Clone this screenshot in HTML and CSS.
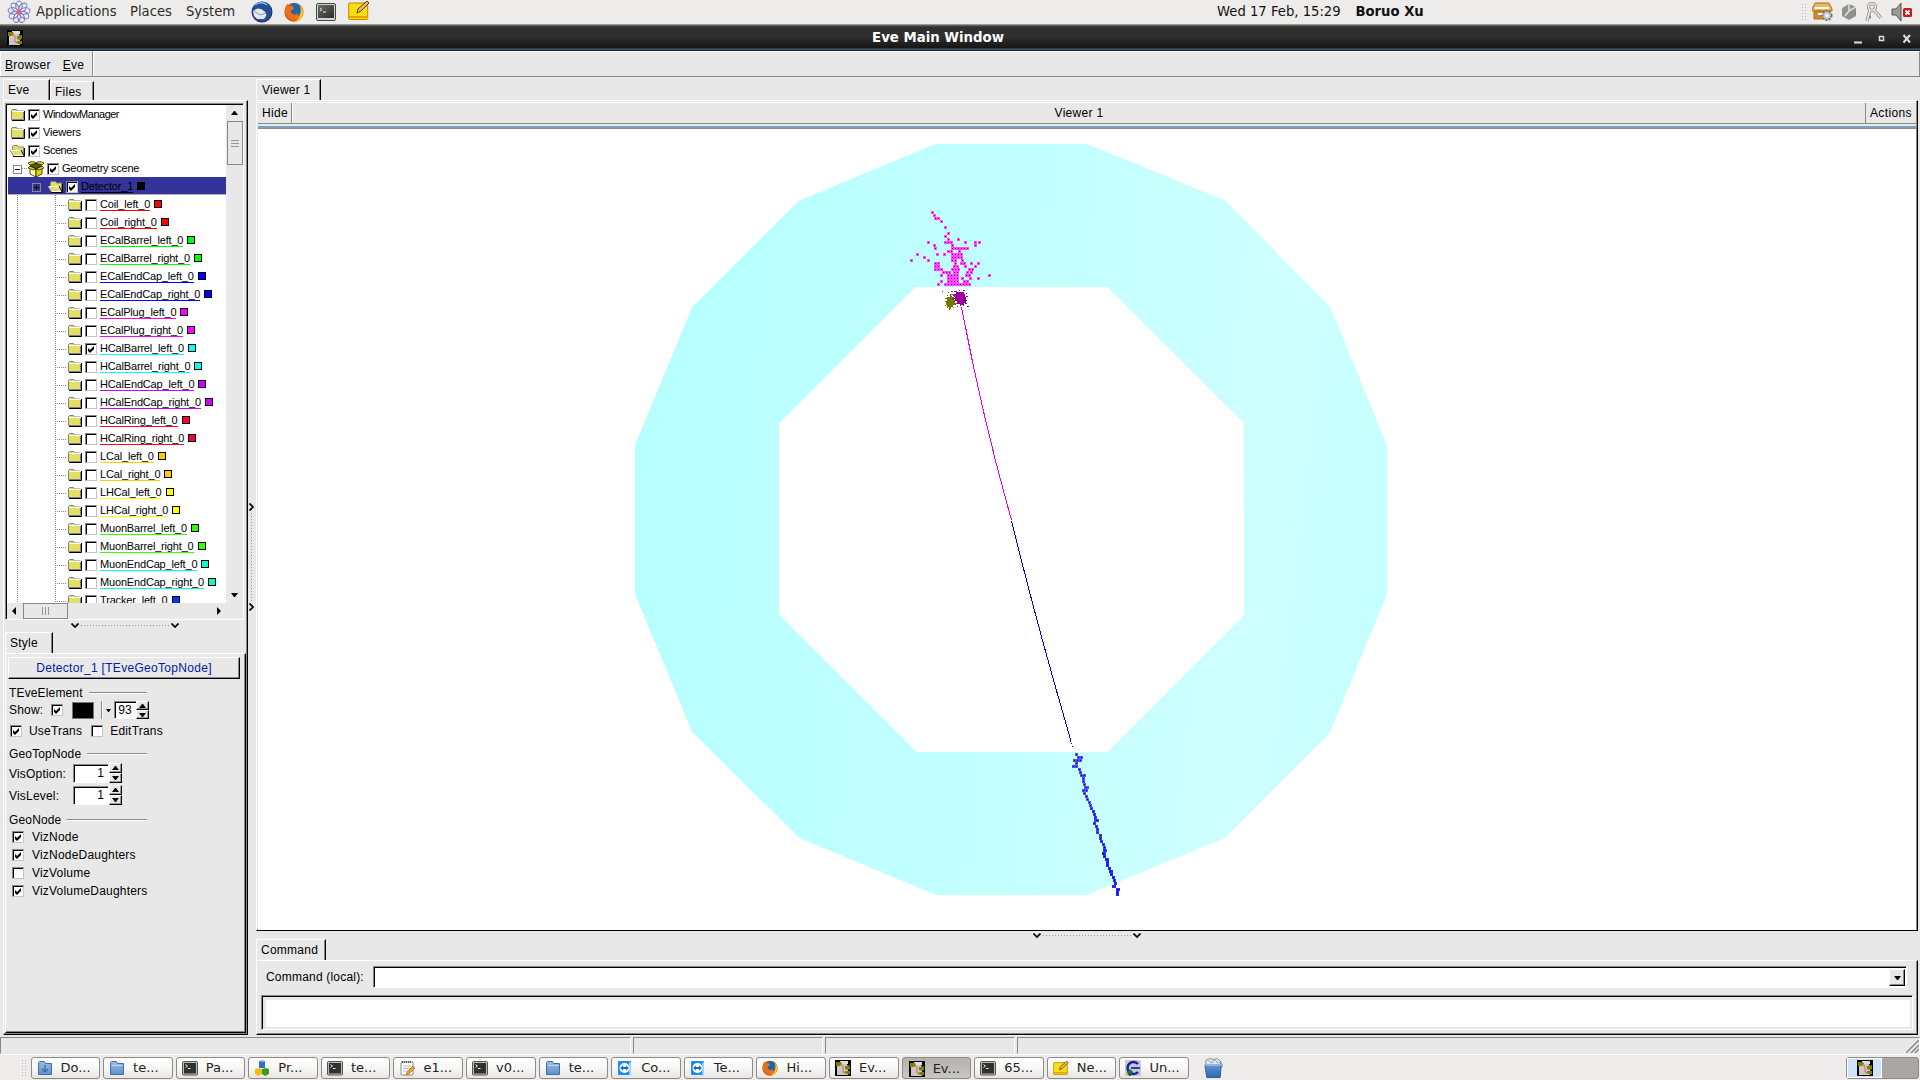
FILE: index.html
```html
<!DOCTYPE html>
<html lang="en">
<head>
<meta charset="utf-8">
<title>Eve Main Window</title>
<link rel="stylesheet" href="styles.css">
</head>
<body>
<svg class="defs" width="0" height="0">
  <defs>
    <pattern id="dither" width="2" height="2" patternUnits="userSpaceOnUse"><rect width="2" height="2" fill="#f4f000"/><rect width="1" height="1" fill="#d0d0c8"/><rect x="1" y="1" width="1" height="1" fill="#d0d0c8"/></pattern>
    <linearGradient id="blue" x1="0" y1="0" x2="0" y2="1"><stop offset="0" stop-color="#9dbde3"/><stop offset="1" stop-color="#5f8fc9"/></linearGradient>
    <linearGradient id="bin" x1="0" y1="0" x2="0" y2="1"><stop offset="0" stop-color="#5f93d2"/><stop offset="1" stop-color="#2f68b0"/></linearGradient>
    <linearGradient id="term" x1="0" y1="0" x2="1" y2="1"><stop offset="0" stop-color="#6a6d68"/><stop offset="1" stop-color="#2b2d2a"/></linearGradient>
    <radialGradient id="fox"><stop offset="0.4" stop-color="#f8a41c"/><stop offset="1" stop-color="#d9480f"/></radialGradient>
    <radialGradient id="bird"><stop offset="0.2" stop-color="#5b9be0"/><stop offset="1" stop-color="#15336e"/></radialGradient>
    <linearGradient id="ring" x1="0" y1="0.42" x2="1" y2="0.54"><stop offset="0" stop-color="#b7ffff"/><stop offset="0.45" stop-color="#c1ffff"/><stop offset="0.84" stop-color="#ceffff"/><stop offset="1" stop-color="#c5ffff"/></linearGradient>
  </defs>
  <symbol id="i-folder" viewBox="0 0 15 13"><path d="M1.5 11.500v-9l1-1h4l1 1.500h6v8.500z" fill="url(#dither)" stroke="#808080"/><path d="M2 3.500h12" stroke="#fff"/><path d="M2 12.500h12.500V3" fill="none" stroke="#000"/></symbol>
  <symbol id="i-open" viewBox="0 0 15 13"><path d="M2.500 10.500v-8l1-1h4l1 1.500h5v8z" fill="url(#dither)" stroke="#808080"/><path d="M0.500 6.500h10l3 5h-10z" fill="url(#dither)" stroke="#fff"/><path d="M0.500 6v1l3 5" fill="none" stroke="#808080"/><path d="M3 12.500h11.500V4M11 6l3 6" fill="none" stroke="#000"/></symbol>
  <symbol id="i-box" viewBox="0 0 16 16"><path d="M2 5l6 3v8l-6-3z" fill="#ffffa0" stroke="#000" stroke-width=".7"/><path d="M14 5L8 8v8l6-3z" fill="#e0d800" stroke="#000" stroke-width=".7"/><path d="M2 5l6-3 6 3-6 3z" fill="#5c5800" stroke="#000" stroke-width=".6"/><path d="M2 4L0 2l5-2 3 2zM14 4l2-2-5-2-3 2zM2 5L0 7l5 2 3-1zM14 5l2 2-5 2-3-1z" fill="#d8d020" stroke="#000" stroke-width=".6"/></symbol>
  <symbol id="i-check" viewBox="0 0 12 12"><path d="M3 5v3l2 2 4-4V3L5 7z" fill="#000"/></symbol>
  <symbol id="i-up" viewBox="0 0 7 4"><path d="M0 4h7L4 0H3z"/></symbol>
  <symbol id="i-down" viewBox="0 0 7 4"><path d="M0 0h7L4 4H3z"/></symbol>
  <symbol id="i-chev" viewBox="0 0 8 5"><path d="M.5.500L4 4 7.500.500" fill="none" stroke="#000" stroke-width="1.700"/></symbol>
  <symbol id="i-eve" viewBox="0 0 16 16"><rect width="16" height="16" fill="#000"/><path d="M2 3h9l2 3v9H2z" fill="#c8c8c8"/><path d="M5 1h8v3H5z" fill="#ddd"/><path d="M1 2h5l1 2-2 2H1zM10 6h3l2-1v4l-2 1-3-1zM9 12l2-1h4v3h-4z" fill="#808000"/><path d="M5 4l3 2v6l2 1" fill="none" stroke="#f55" stroke-width="1"/></symbol>
  <symbol id="i-term" viewBox="0 0 20 18"><rect x=".5" y=".5" width="19" height="17" rx="1.500" fill="#d2d5cf" stroke="#454745"/><rect x="2" y="2" width="16" height="13" fill="url(#term)"/><path d="M4 5l2 1.500L4 8M7 9h3" stroke="#eee" fill="none"/></symbol>
  <symbol id="i-termsm" viewBox="0 0 16 16"><rect x=".5" y="1.500" width="15" height="13.500" rx="1" fill="#b9bcb6" stroke="#555"/><rect x="2" y="3" width="12" height="10.500" fill="#30322f"/><path d="M3.500 4.500l2 1.500-2 1.500M6 8.500h2.500" stroke="#eee" fill="none"/></symbol>
  <symbol id="i-note" viewBox="0 0 22 21"><rect x=".7" y="3" width="19" height="16.500" rx="1" fill="#f9dc12" stroke="#b98a00"/><path d="M1 17h19" stroke="#e3a500" stroke-width="2"/><path d="M9 13l1-4 9-8 2 2-8 8z" fill="#e7b66b" stroke="#4d3510" stroke-width=".9"/></symbol>
  <symbol id="i-fox" viewBox="0 0 20 20"><circle cx="10" cy="10.300" r="9.500" fill="url(#fox)"/><circle cx="10.500" cy="8" r="6.800" fill="#1f66ad"/><path d="M1 8C1 4 3 2 4 2l1 2c3-1 4 0 5 2 0 2-3 1-3 4 1 3 5 3 7 1 0 5-5 7-9 5-3-2-4-5-4-8z" fill="#e8701a"/><path d="M16 3c3 3 4 8 2 12-2 3-5 5-8 5 6-3 8-9 6-17z" fill="#fbc52d"/></symbol>
  <symbol id="i-bird" viewBox="0 0 22 22"><circle cx="11" cy="11" r="10.500" fill="url(#bird)"/><path d="M2 10l5-3 7 2 2 4-3 5-7 0-3-3z" fill="#e6e9ee"/><path d="M3 10l6 4 6-2" fill="none" stroke="#8b95a5"/><path d="M3 5C7 0 16 0 19 5c3 5 1 11-5 15 2-4 2-8-1-10-3-3-6-3-10-2z" fill="#234f96"/><path d="M4 4C8 1 13 1 16 4" fill="none" stroke="#7fb4ee" stroke-width="1.500"/></symbol>
  <symbol id="i-dir" viewBox="0 0 16 16"><path d="M1.500 14.500v-12l1-1h5l1 2h6v11z" fill="url(#blue)" stroke="#3f6fa9"/><path d="M2.500 5.500h11" stroke="#bdd5ef"/></symbol>
  <symbol id="i-save" viewBox="0 0 16 16"><path d="M1.500 14.500v-12l1-1h5l1 2h6v11z" fill="url(#blue)" stroke="#3f6fa9"/><path d="M8 5v6M5 9l3 3 3-3" fill="none" stroke="#2f5f9f" stroke-width="1.500" stroke-dasharray="1.500 .7"/></symbol>
  <symbol id="i-cubes" viewBox="0 0 16 16"><path d="M5 1h6v7H5z" fill="#2e6fd0"/><path d="M5 1l3-1 3 1-3 1.500z" fill="#7fb0f0"/><path d="M1 9l3-1 4 1v5l-4 2-3-2z" fill="#f2bd10"/><path d="M8 9l4-1 3 1v5l-4 2-3-2z" fill="#3c9a2a"/></symbol>
  <symbol id="i-edit" viewBox="0 0 16 16"><rect x="2" y="2" width="12" height="13" rx="1" fill="#fff" stroke="#888"/><path d="M3 2h10" stroke="#555" stroke-width="2" stroke-dasharray="1 1"/><path d="M4 6h8M4 8.500h8M4 11h5" stroke="#bbb"/><path d="M7 15l1-3 6-6 2 2-6 6z" fill="#f59a23" stroke="#a85a00" stroke-width=".6"/></symbol>
  <symbol id="i-team" viewBox="0 0 16 16"><rect x="1" y="1" width="13" height="14" rx="1" fill="#1b8cf0"/><path d="M14 3v12l-2 1V2z" fill="#9dd0fb"/><circle cx="7.500" cy="8" r="5" fill="#fff"/><path d="M3 8l3-2.500V7h3V5.500L12 8l-3 2.500V9H6v1.500z" fill="#0e6fd0"/></symbol>
  <symbol id="i-c" viewBox="0 0 16 16"><rect width="16" height="16" fill="#c9c9cd"/><path d="M13 4a6 6 0 1 0 0 8" fill="none" stroke="#1c1ca8" stroke-width="2.500"/><path d="M6 8h9" stroke="#3434d0" stroke-width="2"/><path d="M2 12l3-3 3 3-2 3H3z" fill="#0a7d20"/><path d="M5 14v2" stroke="#900" stroke-width="1.500"/></symbol>
  <symbol id="i-trash" viewBox="0 0 22 22"><path d="M3 7l0-4 4-2 4 1 4-1 4 4-1 4H3z" fill="#dfe6ec" stroke="#6d7782" stroke-width=".8"/><path d="M6 3l3 3 3-4 4 4" fill="none" stroke="#8b95a0"/><path d="M2 8h17l-1 13H4z" fill="url(#bin)" stroke="#2c5a94"/><path d="M17 4l4 4-2 3z" fill="#3f78bf"/><path d="M2 7h18v2H2z" fill="#8fb7e4"/></symbol>
</svg>

<header class="desk-top">
  <svg class="logo" width="24" height="24" viewBox="-12 -12 24 24"><g fill="none" stroke="#6d74c9" stroke-width="1"><ellipse cy="-6" rx="3.200" ry="5"/><ellipse cy="-6" rx="3.200" ry="5" transform="rotate(40)"/><ellipse cy="-6" rx="3.200" ry="5" transform="rotate(80)"/><ellipse cy="-6" rx="3.200" ry="5" transform="rotate(120)"/><ellipse cy="-6" rx="3.200" ry="5" transform="rotate(160)"/><ellipse cy="-6" rx="3.200" ry="5" transform="rotate(200)"/><ellipse cy="-6" rx="3.200" ry="5" transform="rotate(240)"/><ellipse cy="-6" rx="3.200" ry="5" transform="rotate(280)"/><ellipse cy="-6" rx="3.200" ry="5" transform="rotate(320)"/></g><circle r="2.600" fill="#d66a78"/></svg>
  <span class="m-app">Applications</span><span class="m-places">Places</span><span class="m-system">System</span>
  <svg class="l1" width="22" height="22"><use href="#i-bird"/></svg>
  <svg class="l2" width="20" height="20"><use href="#i-fox"/></svg>
  <svg class="l3" width="20" height="18"><use href="#i-term"/></svg>
  <svg class="l4" width="22" height="21"><use href="#i-note"/></svg>
  <span class="clock">Wed 17 Feb, 15:29</span><b>Boruo Xu</b>
  <div class="tray">
    <i class="grip"></i>
    <svg width="22" height="20" viewBox="0 0 22 20"><path d="M3 1h14l3 6v2H0V7z" fill="#f0b45a" stroke="#a8701c"/><path d="M2 9h16v8H2z" fill="#d08a2c" stroke="#a8701c"/><path d="M3 6h14M6 12h6" stroke="#fff" stroke-width="2"/><circle cx="15" cy="13.500" r="4.500" fill="#ccc" stroke="#777" stroke-width="2" stroke-dasharray="2 1.200"/><circle cx="15" cy="13.500" r="1.500" fill="#fff"/></svg>
    <svg width="14" height="18" viewBox="0 0 14 18"><path d="M0 5l7-4 7 3v9l-7 4-7-4z" fill="#8f918f"/><path d="M7 1v7l7-4M7 8l-4 5" stroke="#e2e2e2" fill="none" stroke-width="1.500"/></svg>
    <svg width="19" height="21" viewBox="0 0 19 21"><g fill="none" stroke="#8d8f8c" stroke-width="3.200"><circle cx="8" cy="5" r="3.500"/><path d="M6 8L3 19M10 8l7 8M4 15h3"/></g><g fill="none" stroke="#eee" stroke-width="1.500"><circle cx="8" cy="5" r="3.500"/><path d="M6 8L3 19M10 8l7 8"/></g></svg>
    <svg width="22" height="18" viewBox="0 0 22 18"><path d="M1 6h4l5-6v18l-5-6H1z" fill="#9a9c98" stroke="#555"/><rect x="12" y="5" width="9" height="9" rx="1.500" fill="#d2141c"/><path d="M14.500 7.500l4 4m0-4l-4 4" stroke="#fff" stroke-width="1.800"/></svg>
  </div>
</header>

<div class="title">
  <svg width="16" height="16"><use href="#i-eve"/></svg>
  <h1>Eve Main Window</h1>
  <svg class="wm" width="62" height="12" viewBox="0 0 62 12" fill="none" stroke="#ddd" stroke-width="2"><path d="M1 9.500h8"/><path d="M26.500 3.500h4v4h-4z" stroke-width="1.500"/><path d="M50.500 2l6.500 7.500m0-7.500l-6.500 7.500"/></svg>
</div>

<nav class="menubar"><div class="menus"><span><u>B</u>rowser</span><span><u>E</u>ve</span></div><div class="rest"></div></nav>

<main>
  <section class="left">
    <div class="tabs"><span class="tab on eve">Eve</span><span class="tab files">Files</span></div>
    <div class="left-frame">
      <div class="treebox">
        <div class="tree-top">
          <div class="tree">
            <div class="row r0"><svg width="15" height="13"><use href="#i-folder"/></svg><i class="cb"><svg width="12" height="12"><use href="#i-check"/></svg></i><span class="wide">WindowManager</span></div>
            <div class="row r0"><svg width="15" height="13"><use href="#i-folder"/></svg><i class="cb"><svg width="12" height="12"><use href="#i-check"/></svg></i><span>Viewers</span></div>
            <div class="row r0"><svg width="15" height="13"><use href="#i-open"/></svg><i class="cb"><svg width="12" height="12"><use href="#i-check"/></svg></i><span class="sc">Scenes</span></div>
            <div class="row r1"><i class="pm minus"></i><svg width="16" height="16"><use href="#i-box"/></svg><i class="cb"><svg width="12" height="12"><use href="#i-check"/></svg></i><span class="geo">Geometry scene</span></div>
            <div class="row r2"><i class="pm plus"></i><svg width="15" height="13"><use href="#i-open"/></svg><i class="cb"><svg width="12" height="12"><use href="#i-check"/></svg></i><span class="n k">Detector_1</span><i class="sw k"></i></div>
            <div class="row leaf red"><svg width="15" height="13"><use href="#i-folder"/></svg><i class="cb"></i><span class="n">Coil_left_0</span><i class="sw"></i></div>
            <div class="row leaf red"><svg width="15" height="13"><use href="#i-folder"/></svg><i class="cb"></i><span class="n">Coil_right_0</span><i class="sw"></i></div>
            <div class="row leaf lime"><svg width="15" height="13"><use href="#i-folder"/></svg><i class="cb"></i><span class="n">ECalBarrel_left_0</span><i class="sw"></i></div>
            <div class="row leaf lime"><svg width="15" height="13"><use href="#i-folder"/></svg><i class="cb"></i><span class="n">ECalBarrel_right_0</span><i class="sw"></i></div>
            <div class="row leaf blue"><svg width="15" height="13"><use href="#i-folder"/></svg><i class="cb"></i><span class="n">ECalEndCap_left_0</span><i class="sw"></i></div>
            <div class="row leaf blue"><svg width="15" height="13"><use href="#i-folder"/></svg><i class="cb"></i><span class="n">ECalEndCap_right_0</span><i class="sw"></i></div>
            <div class="row leaf magenta"><svg width="15" height="13"><use href="#i-folder"/></svg><i class="cb"></i><span class="n">ECalPlug_left_0</span><i class="sw"></i></div>
            <div class="row leaf magenta"><svg width="15" height="13"><use href="#i-folder"/></svg><i class="cb"></i><span class="n">ECalPlug_right_0</span><i class="sw"></i></div>
            <div class="row leaf cyan"><svg width="15" height="13"><use href="#i-folder"/></svg><i class="cb"><svg width="12" height="12"><use href="#i-check"/></svg></i><span class="n">HCalBarrel_left_0</span><i class="sw"></i></div>
            <div class="row leaf cyan"><svg width="15" height="13"><use href="#i-folder"/></svg><i class="cb"></i><span class="n">HCalBarrel_right_0</span><i class="sw"></i></div>
            <div class="row leaf violet"><svg width="15" height="13"><use href="#i-folder"/></svg><i class="cb"></i><span class="n">HCalEndCap_left_0</span><i class="sw"></i></div>
            <div class="row leaf violet"><svg width="15" height="13"><use href="#i-folder"/></svg><i class="cb"></i><span class="n">HCalEndCap_right_0</span><i class="sw"></i></div>
            <div class="row leaf crimson"><svg width="15" height="13"><use href="#i-folder"/></svg><i class="cb"></i><span class="n">HCalRing_left_0</span><i class="sw"></i></div>
            <div class="row leaf crimson"><svg width="15" height="13"><use href="#i-folder"/></svg><i class="cb"></i><span class="n">HCalRing_right_0</span><i class="sw"></i></div>
            <div class="row leaf orange"><svg width="15" height="13"><use href="#i-folder"/></svg><i class="cb"></i><span class="n">LCal_left_0</span><i class="sw"></i></div>
            <div class="row leaf orange"><svg width="15" height="13"><use href="#i-folder"/></svg><i class="cb"></i><span class="n">LCal_right_0</span><i class="sw"></i></div>
            <div class="row leaf yellow"><svg width="15" height="13"><use href="#i-folder"/></svg><i class="cb"></i><span class="n">LHCal_left_0</span><i class="sw"></i></div>
            <div class="row leaf yellow"><svg width="15" height="13"><use href="#i-folder"/></svg><i class="cb"></i><span class="n">LHCal_right_0</span><i class="sw"></i></div>
            <div class="row leaf green"><svg width="15" height="13"><use href="#i-folder"/></svg><i class="cb"></i><span class="n">MuonBarrel_left_0</span><i class="sw"></i></div>
            <div class="row leaf green"><svg width="15" height="13"><use href="#i-folder"/></svg><i class="cb"></i><span class="n">MuonBarrel_right_0</span><i class="sw"></i></div>
            <div class="row leaf teal"><svg width="15" height="13"><use href="#i-folder"/></svg><i class="cb"></i><span class="n">MuonEndCap_left_0</span><i class="sw"></i></div>
            <div class="row leaf teal"><svg width="15" height="13"><use href="#i-folder"/></svg><i class="cb"></i><span class="n">MuonEndCap_right_0</span><i class="sw"></i></div>
            <div class="row leaf azure"><svg width="15" height="13"><use href="#i-folder"/></svg><i class="cb"></i><span class="n">Tracker_left_0</span><i class="sw"></i></div>
          </div>
          <div class="vscroll"><svg width="7" height="4"><use href="#i-up"/></svg><i class="thumb"></i><svg class="end" width="7" height="4"><use href="#i-down"/></svg></div>
        </div>
        <div class="hscroll"><svg width="4" height="8" viewBox="0 0 4 8"><path d="M4 0v8L0 4z"/></svg><i class="thumb"></i><svg class="end" width="4" height="8" viewBox="0 0 4 8"><path d="M0 0v8l4-4z"/></svg></div>
      </div>
      <div class="hsplit"><svg width="8" height="5"><use href="#i-chev"/></svg><i></i><svg width="8" height="5"><use href="#i-chev"/></svg></div>
      <div class="tabs st"><span class="tab on style">Style</span></div>
      <div class="style-frame">
        <div class="obj">Detector_1 [TEveGeoTopNode]</div>
        <div class="grp g1"><span>TEveElement</span><hr></div>
        <div class="line show"><span>Show:</span><i class="cb"><svg width="12" height="12"><use href="#i-check"/></svg></i><i class="color"></i><i class="sep"></i><svg width="5" height="3" viewBox="0 0 7 4"><path d="M0 0h7L4 4H3z"/></svg><span class="num n93">93</span><i class="spin s18"><b><svg width="7" height="4"><use href="#i-up"/></svg></b><b><svg width="7" height="4"><use href="#i-down"/></svg></b></i></div>
        <div class="line trans"><i class="cb"><svg width="12" height="12"><use href="#i-check"/></svg></i><span>UseTrans</span><i class="cb second"></i><span>EditTrans</span></div>
        <div class="grp g2"><span>GeoTopNode</span><hr></div>
        <div class="line vis"><span>VisOption:</span><span class="num">1</span><i class="spin"><b><svg width="7" height="4"><use href="#i-up"/></svg></b><b><svg width="7" height="4"><use href="#i-down"/></svg></b></i></div>
        <div class="line vis"><span>VisLevel:</span><span class="num">1</span><i class="spin"><b><svg width="7" height="4"><use href="#i-up"/></svg></b><b><svg width="7" height="4"><use href="#i-down"/></svg></b></i></div>
        <div class="grp g3"><span>GeoNode</span><hr></div>
        <div class="line viz"><i class="cb"><svg width="12" height="12"><use href="#i-check"/></svg></i><span>VizNode</span></div>
        <div class="line viz"><i class="cb"><svg width="12" height="12"><use href="#i-check"/></svg></i><span>VizNodeDaughters</span></div>
        <div class="line viz"><i class="cb"></i><span>VizVolume</span></div>
        <div class="line viz"><i class="cb"><svg width="12" height="12"><use href="#i-check"/></svg></i><span>VizVolumeDaughters</span></div>
      </div>
    </div>
  </section>

  <div class="vsplit"><svg width="5" height="8" viewBox="0 0 5 8"><path d="M.5.500L4 4 .5 7.500" fill="none" stroke="#000" stroke-width="1.700"/></svg><i></i><svg width="5" height="8" viewBox="0 0 5 8"><path d="M.5.500L4 4 .5 7.500" fill="none" stroke="#000" stroke-width="1.700"/></svg></div>

  <section class="right">
    <div class="tabs"><span class="tab on viewer">Viewer 1</span></div>
    <div class="view-frame">
      <div class="view-bar"><span class="hide">Hide</span><span class="name">Viewer 1</span><span class="actions">Actions</span></div>
      <div class="accent"></div>
      <svg class="canvas" width="1658" height="801" viewBox="258 129 1658 801" shape-rendering="crispEdges">
        <path fill="url(#ring)" fill-rule="evenodd" d="M936.500 143.500H1086.500L1225 200.500 1330 306.500 1387 445V594L1330 732.500 1225 838 1086.500 895H936.500L799.500 838 692.500 732.500 635 594V445L692.500 306.500 799.500 200.500ZM915.500 287L779 423.500V615L915.500 751.500H1108L1244 615V423.500L1108 287Z"/>
        <g transform="translate(900 200)" fill="none">
          <path stroke="#ff48ff" stroke-width="3" d="M31 12.500h3M33 15.500h3M34 18.500h6M40 21.500h3M44 27.500h3M47 33.500h3M44 36.500h3M47 39.500h3M57 39.500h3M27 42.500h3M44 42.500h9M64 42.500h3M74 42.500h3M78 42.500h3M33 45.500h3M51 45.500h3M74 45.500h3M34 48.500h3M51 48.500h18M47 51.500h6M58 51.500h3M16 54.500h3M36 54.500h3M43 54.500h3M51 54.500h12M23 57.500h3M51 57.500h12M10 60.500h3M27 60.500h3M51 60.500h6M61 60.500h3M34 63.500h6M54 63.500h3M60 63.500h6M70 63.500h3M77 63.500h3M34 66.500h6M53 66.500h6M64 66.500h3M74 66.500h3M34 69.500h9M51 69.500h9M68 69.500h6M42 72.500h9M53 72.500h6M66 72.500h3M70 72.500h3M40 75.500h3M47 75.500h12M65 75.500h6M88 75.500h3M47 78.500h12M61 78.500h3M69 78.500h3M77 78.500h3M40 81.500h3M47 81.500h12M63 81.500h6M37 84.500h3M44 84.500h27"/>
          <path stroke="#800080" stroke-dasharray="0 1 1 1" d="M31 12.500h3M33 15.500h3M34 18.500h6M40 21.500h3M44 27.500h3M47 33.500h3M44 36.500h3M47 39.500h3M57 39.500h3M27 42.500h3M44 42.500h9M64 42.500h3M74 42.500h3M78 42.500h3M33 45.500h3M51 45.500h3M74 45.500h3M34 48.500h3M51 48.500h18M47 51.500h6M58 51.500h3M16 54.500h3M36 54.500h3M43 54.500h3M51 54.500h12M23 57.500h3M51 57.500h12M10 60.500h3M27 60.500h3M51 60.500h6M61 60.500h3M34 63.500h6M54 63.500h3M60 63.500h6M70 63.500h3M77 63.500h3M34 66.500h6M53 66.500h6M64 66.500h3M74 66.500h3M34 69.500h9M51 69.500h9M68 69.500h6M42 72.500h9M53 72.500h6M66 72.500h3M70 72.500h3M40 75.500h3M47 75.500h12M65 75.500h6M88 75.500h3M47 78.500h12M61 78.500h3M69 78.500h3M77 78.500h3M40 81.500h3M47 81.500h12M63 81.500h6M37 84.500h3M44 84.500h27"/>
          <path fill="#767600" d="M47 97h3v-1h2v1h2v3h1v5h-2v2h-2v2h-2v-2h-2v-2h-1v-3h1z"/>
          <path stroke="#767600" d="M48 92.500h1M50 94.500h4M47 95.500h1M45 98.500h2M45 101.500h2M53 107.500h1M55 103.500h2M47 107.500h1M49 109.500h1M45 105.500h1"/>
          <path fill="#9c009c" d="M56 92h8v2h1v3h1v6h-2v2h-4v-1h-3v-3h-2v-4h-1v-3h2z"/>
          <path stroke="#9c009c" d="M42 91.500h1M51 91.500h2M54 91.500h3M59 90.500h1M63 90.500h2M66 93.500h1M66 96.500h2M53 95.500h3M52 98.500h3M66 100.500h1M65 103.500h2M67 106.500h2M60 105.500h1M55 104.500h1M57 106.500h1M63 105.500h1M50 95.500h1"/>
        </g>
        <path fill="none" stroke="#e400e4" d="M961.500 307Q983 420 1011.500 520"/>
        <path fill="none" stroke="#0000c8" d="M1011.500 521Q1037 625 1071 741"/><path stroke="#000080" d="M1070 741.500h1M1071 743.500h1M1072 746.500h1"/>
        <g fill="none" stroke="#5050ff" stroke-width="3">
          <path d="M1075 754.500h3M1077 757.500h6M1073 760.500h9M1075 763.500h3M1072 766.500h6M1078 769.500h3M1079 772.500h3M1080 775.500h6M1082 778.500h3M1082 781.500h3M1083 784.500h3M1084 787.500h5M1082 790.500h6M1083 793.500h3M1085 796.500h3M1086 799.500h3M1088 802.500h3M1089 805.500h3"/>
          <path stroke="#3c3cff" d="M1090 808.500h3M1092 811.500h3M1093 814.500h3M1094 817.500h3M1094 820.500h5M1093 823.500h3M1095 826.500h3M1096 829.500h3M1096 832.500h3M1099 835.500h3M1099 838.500h3M1100 841.500h3M1102 844.500h3M1103 847.500h3M1103 850.500h4"/>
          <path stroke="#2828ff" d="M1102 853.500h4M1103 856.500h3M1105 859.500h4M1106 862.500h3M1106 865.500h3M1108 868.500h3M1109 871.500h4M1110 874.500h3M1112 877.500h3M1113 880.500h3M1114 883.500h3M1112 886.500h4M1116 889.500h4M1116 892.500h3M1116 894.500h3"/>
          <path stroke="#000080" stroke-width="1" stroke-dasharray="0 1 1 1" d="M1075 754.500h3M1077 757.500h6M1073 760.500h9M1075 763.500h3M1072 766.500h6M1078 769.500h3M1079 772.500h3M1080 775.500h6M1082 778.500h3M1082 781.500h3M1083 784.500h3M1085 787.500h3M1082 790.500h6M1083 793.500h3M1085 796.500h3M1086 799.500h3M1088 802.500h3M1089 805.500h3M1090 808.500h3M1092 811.500h3M1093 814.500h3M1094 817.500h3M1095 820.500h3M1093 823.500h3M1095 826.500h3M1096 829.500h3M1096 832.500h3M1099 835.500h3M1099 838.500h3M1100 841.500h3M1102 844.500h3M1103 847.500h3M1103 850.500h3M1102 853.500h3M1103 856.500h3M1105 859.500h3M1106 862.500h3M1106 865.500h3M1108 868.500h3M1109 871.500h3M1110 874.500h3M1112 877.500h3M1113 880.500h3M1114 883.500h3M1112 886.500h3M1116 889.500h3M1116 892.500h3M1116 894.500h3"/>
        </g>
      </svg>
    </div>
    <div class="hsplit wide-split"><svg width="8" height="5"><use href="#i-chev"/></svg><i></i><svg width="8" height="5"><use href="#i-chev"/></svg></div>
    <div class="tabs cmdtabs"><span class="tab on cmd">Command</span></div>
    <div class="cmd-frame">
      <div class="cmd-line"><label>Command (local):</label><div class="combo"><i class="drop"><svg width="7" height="4"><use href="#i-down"/></svg></i></div></div>
      <div class="output"><div></div></div>
    </div>
  </section>
</main>

<div class="status"><i class="s1"></i><i class="s2"></i><i class="s3"></i><i class="s4"><svg width="13" height="13" viewBox="0 0 13 13"><path d="M0 13L13 0M5 13l8-8M9 13l4-4" stroke="#888" stroke-width="1.500"/></svg></i></div>

<footer class="taskbar">
  <i class="grip"></i>
  <div class="tasks">
    <span><svg width="16" height="16"><use href="#i-save"/></svg>Do...</span>
    <span><svg width="16" height="16"><use href="#i-dir"/></svg>te...</span>
    <span><svg width="16" height="16"><use href="#i-termsm"/></svg>Pa...</span>
    <span><svg width="16" height="16"><use href="#i-cubes"/></svg>Pr...</span>
    <span><svg width="16" height="16"><use href="#i-termsm"/></svg>te...</span>
    <span><svg width="16" height="16"><use href="#i-edit"/></svg>e1...</span>
    <span><svg width="16" height="16"><use href="#i-termsm"/></svg>v0...</span>
    <span><svg width="16" height="16"><use href="#i-dir"/></svg>te...</span>
    <span><svg width="16" height="16"><use href="#i-team"/></svg>Co...</span>
    <span><svg width="16" height="16"><use href="#i-team"/></svg>Te...</span>
    <span><svg width="16" height="16"><use href="#i-fox"/></svg>Hi...</span>
    <span><svg width="16" height="16"><use href="#i-eve"/></svg>Ev...</span>
    <span class="active"><svg width="16" height="16"><use href="#i-eve"/></svg>Ev...</span>
    <span><svg width="16" height="16"><use href="#i-termsm"/></svg>65...</span>
    <span><svg width="16" height="16"><use href="#i-note"/></svg>Ne...</span>
    <span><svg width="16" height="16"><use href="#i-c"/></svg>Un...</span>
  </div>
  <svg class="trash" width="21" height="22"><use href="#i-trash"/></svg>
  <div class="pager"><i><svg width="16" height="16"><use href="#i-eve"/></svg></i></div>
</footer>
</body>
</html>
```
FILE: styles.css
```css
* { box-sizing: border-box; }
html, body { margin: 0; height: 1080px; overflow: hidden; }
body {
  width: 1920px; display: flex; flex-direction: column; background: #e8e8e8; color: #000;
  font: 12px/14px "Liberation Sans", Arial, sans-serif; letter-spacing: 0.15px;
}
i { font-style: normal; display: block; flex: none; }
svg { display: block; flex: none; }

/* desktop panel */
.desk-top {
  height: 25px; flex: none; display: flex; align-items: center; padding-left: 7px;
  background: #edecea; border-bottom: 1px solid #9c9a94;
  font: 13.2px/22px "DejaVu Sans", sans-serif; letter-spacing: 0; color: #2c2c2c;
}
.desk-top span, .desk-top b { white-space: nowrap; flex: none; }
.m-app { width: 94px; margin-left: 5px; }
.m-places { width: 56px; }
.m-system { width: 65px; }
.l2 { margin-left: 11px; }
.l3 { margin-left: 12px; }
.l4 { margin-left: 12px; margin-top: -3px; }
.clock { margin-left: 847px; width: 138.500px; }
.desk-top .clock, .desk-top b { color: #111; }
.tray { margin-left: auto; display: flex; align-items: center; gap: 8px; padding-right: 7px; }
.grip { width: 5px; height: 18px; background: radial-gradient(circle, #b5b3ae 0.8px, transparent 1px) 0 0/3px 3px; }
.tray .grip { margin-right: -2px; }

/* window title */
.title {
  height: 26px; flex: none; display: flex; align-items: center; padding: 1px 5px 1px 7px;
  background: linear-gradient(#6a6a6a 0, #303030 2px, #2e2e2e 12px, #161616 23px, #4c6488 24px, #0c0f14 26px);
}
h1 { flex: 1; margin: 0; text-align: center; color: #fff; font: bold 13.300px/18px "DejaVu Sans", sans-serif; letter-spacing: 0; }
.wm { margin-top: 2px; }

.menubar { height: 26px; flex: none; display: flex; border-bottom: 1px solid #8a8a8a; }
.menus { width: 93px; display: flex; gap: 12px; align-items: center; padding: 2px 0 0 4px; border-right: 1px solid #8a8a8a; border-top: 1px solid #fff; border-left: 1px solid #fff; letter-spacing: 0.25px; }
.rest { flex: 1; border-left: 1px solid #fff; border-top: 1px solid #fff; border-right: 1px solid #8a8a8a; }

main { height: 959px; flex: none; display: flex; }

/* tabs */
.tabs { height: 23px; flex: none; display: flex; align-items: flex-end; letter-spacing: 0.25px; }
.tab { height: 19px; padding: 3px 0 0 4px; border-left: 1px solid #fff; border-top: 1px solid #fff; border-right: 1px solid #000; box-shadow: inset -1px 0 #888; border-top-left-radius: 2px; white-space: nowrap; }
.tab.on { height: 21px; padding: 3px 0 0 4px; }
.eve { width: 47px; }
.files { width: 44px; }
.style { width: 48px; }
.viewer { width: 65px; }
.tab.viewer { padding-left: 5px; }
.cmd { width: 70px; }

.left { width: 248px; flex: none; padding-left: 3px; display: flex; flex-direction: column; }
.left-frame {
  height: 935px; flex: none; display: flex; flex-direction: column; padding: 3px 0 0 1px;
  border-right: 1px solid #000; border-bottom: 1px solid #000; border-left: 1px solid #fff; border-top: 1px solid #fff;
  box-shadow: inset -1px -1px #888;
}

/* tree */
.treebox { width: 239px; height: 517px; margin-top: -1px; flex: none; border: 1px solid; border-color: #888 #fff #fff #888; box-shadow: inset 1px 1px #000; padding: 1px 0 0 1px; }
.tree-top { display: flex; height: 498px; }
.tree { flex: 1; background: #fff; overflow: hidden; font-size: 11px; letter-spacing: -0.170px; }
.row { height: 18px; display: flex; align-items: center; white-space: nowrap; }
.row > .cb { margin: 2px 3px 0 3px; }
.row > svg { margin-top: 1px; }
.row > span { height: 17px; line-height: 17px; }
.row .wide { letter-spacing: -0.500px; }
.row .sc { letter-spacing: -0.450px; }
.row .geo { letter-spacing: -0.250px; }
.cb { width: 12px; height: 12px; background: #fff; border: 1px solid; border-color: #888 #c4c4c4 #c4c4c4 #888; box-shadow: inset 1px 1px #000; }
.cb svg { margin: -1px; }
.r0 { padding-left: 3px; }
.r1 { padding-left: 6px; background: repeating-linear-gradient(90deg, #888 0 1px, #0000 1px 2px) 15px 9px/6px 1px no-repeat; }
.r1 > svg { margin-left: 6px; }
.r2 { padding-left: 24px; margin-left: 1px; padding-top: 1px; border-bottom: 1px solid #b0b0b0; background: #333399; }
.r2 > svg { margin-left: 7px; }
.pm { width: 9px; height: 9px; border: 1px solid #888; margin-top: 2px; background: linear-gradient(#000, #000) 1px 3px/5px 1px no-repeat; }
.plus { background: linear-gradient(#000, #000) 1px 3px/5px 1px no-repeat, linear-gradient(#000, #000) 3px 1px/1px 5px no-repeat; }
.leaf {
  padding-left: 60px;
  background:
    repeating-linear-gradient(#888 0 1px, #0000 1px 2px) 10px 0/1px 18px no-repeat,
    repeating-linear-gradient(#888 0 1px, #0000 1px 2px) 48px 0/1px 18px no-repeat,
    repeating-linear-gradient(90deg, #888 0 1px, #0000 1px 2px) 50px 10px/10px 1px no-repeat;
}
.row > .n { border-bottom: 1px solid var(--c, #000); height: 14px; line-height: 14px; }
.sw { width: 8px; height: 8px; border: 1px solid #000; background: var(--c, #000); margin: 0 0 0 4px; }
.red { --c: #ff0000; } .lime { --c: #00ff00; } .blue { --c: #0000ff; } .magenta { --c: #ff00ff; }
.cyan { --c: #00ffff; } .violet { --c: #cc00ff; } .crimson { --c: #ff0033; } .orange { --c: #ffcc00; }
.yellow { --c: #ffff00; } .green { --c: #33ff00; } .teal { --c: #00ffcc; } .azure { --c: #0033ff; }

.vscroll { width: 17px; flex: none; display: flex; flex-direction: column; align-items: center; padding-top: 6px; }
.vscroll .thumb { margin-top: 6px; width: 16px; height: 44px; border: 1px solid #888; background: linear-gradient(#999 1px, #0000 1px 3px, #999 3px 4px, #0000 4px 6px, #999 6px 7px, #0000 7px) 3px 18px/8px 8px no-repeat; }
.end { margin-top: auto; }
.vscroll .end { margin-bottom: 6px; }
.hscroll { height: 16px; display: flex; align-items: center; padding-left: 5px; }
.hscroll .thumb { margin-left: 7px; width: 45px; height: 16px; border: 1px solid #888; background: linear-gradient(90deg, #999 1px, #0000 1px 3px, #999 3px 4px, #0000 4px 6px, #999 6px 7px, #0000 7px) 18px 3px/8px 8px no-repeat; }
.hscroll .end { margin: 0 22px 0 auto; }

/* splitters */
.hsplit { height: 12px; flex: none; display: flex; align-items: center; gap: 2px; padding: 0 0 1px 66px; }
.hsplit i { width: 88px; height: 1px; background: repeating-linear-gradient(90deg, #999 0 1px, #0000 1px 3px); }
.vsplit { width: 8px; flex: none; padding: 426px 0 0 1px; }
.vsplit i { width: 1px; height: 88px; margin: 2px 0 2px 2px; background: repeating-linear-gradient(#999 0 1px, #0000 1px 3px); }

/* style editor */
.tabs.st { height: 21px; }
.style-frame { width: 241px; height: 380px; flex: none; border: 1px solid; border-color: #fff #000 #000 #fff; box-shadow: inset -1px -1px #888; padding: 3px 0 0 3px; letter-spacing: 0.2px; }
.obj { width: 232px; margin-left: -1px; height: 22px; border: 1px solid; border-color: #fff #000 #000 #fff; box-shadow: inset -1px -1px #888; text-align: center; line-height: 21px; color: #00209f; letter-spacing: 0.300px; }
.grp { display: flex; align-items: center; gap: 6px; width: 138px; height: 16px; letter-spacing: 0.15px; }
.grp hr { flex: 1; height: 2px; margin: 0; border: 0; border-top: 1px solid #888; border-bottom: 1px solid #fff; }
.g1 { margin-top: 6px; }
.g2 { margin-top: 6px; }
.g3 { margin-top: 6px; }
.line { display: flex; align-items: center; height: 18px; }
.show > .cb { margin-left: 8px; }
.show > span:first-child { width: 34px; }
.color { width: 22px; height: 17px; margin-left: 9px; background: #000; border: 1px solid #777; }
.sep { width: 2px; height: 18px; margin: 0 3px 0 7px; background: linear-gradient(90deg, #888 50%, #fff 50%); }
.num { background: #fff; border: 1px solid; border-color: #888 #fff #fff #888; box-shadow: inset 1px 1px #000; width: 36px; height: 19px; line-height: 17px; text-align: right; padding-right: 4px; }
.n93 { width: 23px; height: 18px; margin-left: 3px; padding-right: 4px; }
.spin { width: 13px; height: 20px; margin-left: 0; display: flex; flex-direction: column; }
.s18 { height: 18px; margin-left: -1px; }
.spin b { flex: 1; display: flex; align-items: center; justify-content: center; border: 1px solid; border-color: #fff #000 #000 #fff; box-shadow: inset -1px -1px #999; }
.trans { margin-top: 3px; }
.trans .cb { margin-left: 1px; margin-right: 7px; }
.trans .second { margin-left: 9px; }
.vis { height: 22px; }
.vis span:first-child { width: 64px; padding-top: 2px; }
.viz .cb { margin: 0 8px 0 3px; }

/* viewer */
.right { width: 1662px; flex: none; display: flex; flex-direction: column; }
.view-frame { height: 831px; flex: none; width: 1662px; border: 1px solid; border-color: #fff #000 #000 #fff; box-shadow: inset -1px -1px #888; padding: 1px; }
.view-bar { height: 22px; display: flex; border-bottom: 1px solid #888; border-top: 1px solid #fff; line-height: 20px; }
.hide { width: 34px; padding-left: 4px; border-right: 1px solid #888; letter-spacing: 0.3px; }
.name { flex: 1; text-align: center; border-left: 1px solid #fff; letter-spacing: 0.300px; }
.actions { width: 51px; padding-left: 4px; border-left: 1px solid #888; letter-spacing: 0.35px; }
.accent { height: 5px; border-top: 2px solid #e8e8e8; background: linear-gradient(#7f9fbf 0 2px, #8c8c8c 2px); }
.canvas { background: #fff; }
.wide-split { padding: 1px 0 0 777px; height: 7px; }
.cmdtabs { height: 22px; }
.cmd-frame { height: 75px; flex: none; width: 1662px; border: 1px solid; border-color: #fff #000 #000 #fff; box-shadow: inset -1px -1px #888; padding: 5px 0 0 4px; }
.cmd-line { display: flex; align-items: center; height: 22px; }
.cmd-line label { width: 112px; padding-left: 5px; letter-spacing: 0.2px; }
.combo { width: 1534px; height: 22px; background: #fff; border: 1px solid; border-color: #888 #fff #fff #888; box-shadow: inset 1px 1px #000; display: flex; justify-content: flex-end; padding: 2px 1px 1px; }
.drop { width: 16px; display: flex; align-items: center; justify-content: center; background: #e8e8e8; border: 1px solid; border-color: #fff #000 #000 #fff; box-shadow: inset -1px -1px #888; }
.output { width: 1652px; height: 35px; margin-top: 7px; border: 1px solid; border-color: #888 #fff #fff #888; box-shadow: inset 1px 1px #000; padding: 4px 2px 2px 4px; }
.output div { height: 27px; background: #fff; }

/* status bar */
.status { height: 19px; flex: none; display: flex; gap: 2px; padding-top: 1px; border-bottom: 1px solid #fff; }
.status i { border: 1px solid; border-color: #888 #fff #e8e8e8 #888; }
.s1 { width: 631px; } .s2 { width: 190px; } .s3 { width: 190px; }
.status .s4 { flex: 1; display: flex; justify-content: flex-end; align-items: flex-end; }

/* taskbar */
.taskbar { height: 25px; flex: none; display: flex; align-items: flex-start; padding: 2px 1px 0 21px; background: #edecea; font: 13px/20px "DejaVu Sans", sans-serif; letter-spacing: 0; color: #222; }
.taskbar .grip { margin: 2px 4.500px 0 0; }
.tasks { display: flex; gap: 3px; }
.tasks span { width: 69.600px; height: 22px; border: 1px solid #8f8b86; border-radius: 3px; background: linear-gradient(#fff, #f7f7f6 50%, #e6e5e3); display: flex; align-items: center; gap: 8px; padding-left: 5px; white-space: nowrap; }
.tasks .active { background: linear-gradient(#b5b2ae, #c9c6c2); padding: 2px 0 0 6px; }
.trash { margin-left: 14px; }
.pager { margin-left: auto; width: 73px; height: 22px; background: #aaa6a2; border: 1px solid #918d88; border-radius: 3px; }
.pager i { width: 35px; height: 20px; border: 1px solid #fff; background: #d0e2fa; display: flex; justify-content: center; padding-top: 1px; }
```
